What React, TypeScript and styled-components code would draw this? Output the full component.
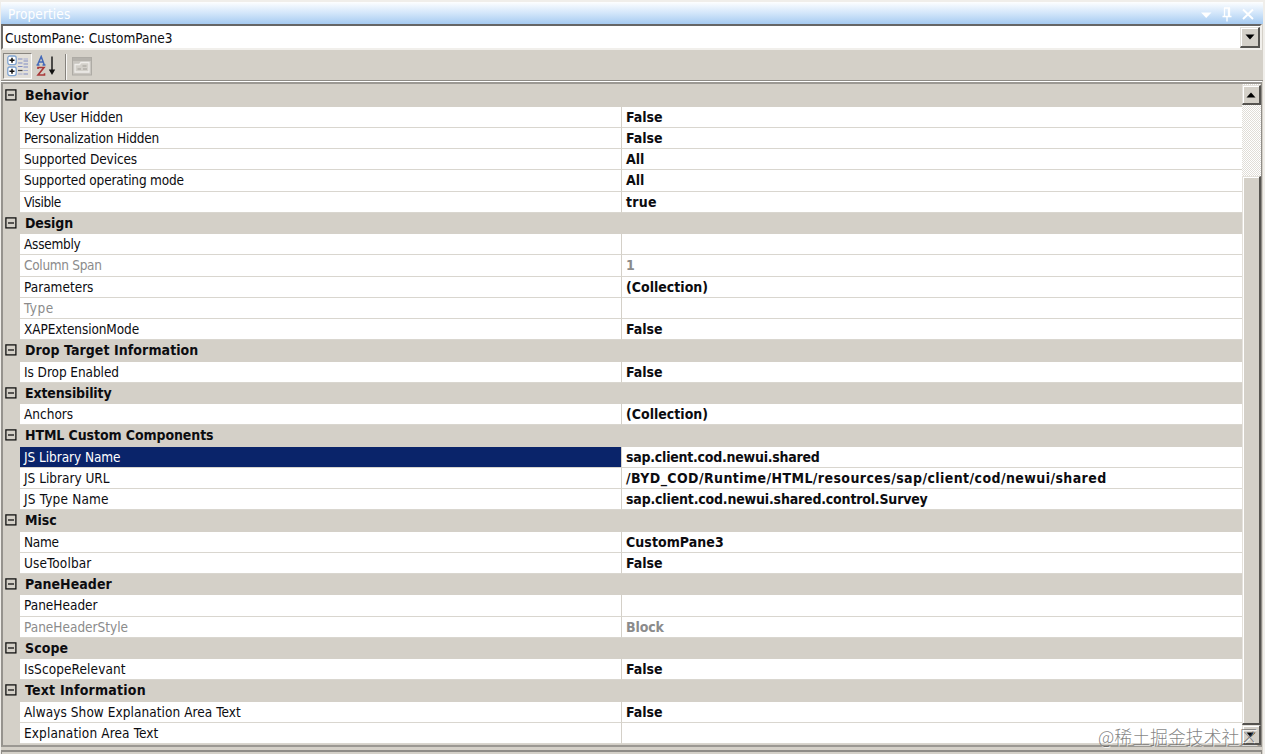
import React from 'react';
import styled, { createGlobalStyle, css } from 'styled-components';

const FACE = '#d4d0c8';

const GlobalStyle = createGlobalStyle`
  html, body { margin: 0; padding: 0; overflow: hidden; background: #f0eeea; }
  * { box-sizing: border-box; }
`;

const Page = styled.div`
  position: relative;
  width: 1265px;
  height: 754px;
  padding: 2px 2px 0 1px;
  overflow: hidden;
  background: #f0eeea;
  font-family: 'DejaVu Sans Condensed', 'DejaVu Sans', sans-serif;
  font-stretch: condensed;
  font-size: 13.5px;
  color: #0c0c10;
`;

const Panel = styled.div`
  display: flex;
  flex-direction: column;
  width: 1262px;
  height: 752px;
  background: ${FACE};
`;

const TitleBar = styled.div`
  display: flex;
  flex: none;
  justify-content: space-between;
  align-items: center;
  height: 22px;
  padding: 2px 9px 0 7px;
  background: linear-gradient(#fdfeff, #d3e6fa 50%, #a6cbf1);
  color: #fff;
`;

const TitleIcons = styled.svg`
  width: 56px;
  height: 16px;
`;

const Label = styled.span<{ $track?: number }>`
  white-space: nowrap;
  letter-spacing: ${(p) => p.$track ?? 0}px;
`;

const Combo = styled.div`
  display: flex;
  flex: none;
  width: 1261px;
  height: 26px;
  border: 2px solid;
  border-color: #666 #f1efeb #f1efeb #6e6c69;
  background: #fff;
`;

const ComboText = styled.div`
  flex: 1;
  padding-left: 2px;
  line-height: 25px;
`;

const Bevel = styled.div`
  display: flex;
  flex: none;
  align-items: center;
  justify-content: center;
  background: ${FACE};
  border: solid;
  border-width: 1px 2px 2px 1px;
  border-color: #e4e1db #55534f #55534f #e4e1db;
  box-shadow: inset 1px 1px #fff;
`;

const ComboButton = styled(Bevel)`
  width: 20px;
  height: 21px;
  margin-top: 1px;
`;

const ArrowIcon = styled.svg`
  width: 10px;
  height: 6px;
  fill: #000;
`;

const Toolbar = styled.div`
  display: flex;
  flex: none;
  align-items: flex-start;
  height: 31px;
  padding: 3px 0 0 2px;
  border-bottom: 1px solid #8f8c87;
`;

const PressedButton = styled.div`
  display: flex;
  align-items: center;
  justify-content: center;
  width: 29px;
  height: 26px;
  border: 1px solid;
  border-color: #88857f #fbfaf9 #fbfaf9 #88857f;
  background: #e2dfd9;
`;

const FlatButton = styled.div`
  display: flex;
  align-items: center;
  justify-content: center;
  width: 29px;
  height: 26px;
`;

const Separator = styled.div`
  width: 2px;
  height: 26px;
  margin: 1px 0 0 4px;
  border-left: 1px solid #85827d;
  border-right: 1px solid #f8f7f5;
`;

const Grid = styled.div`
  display: flex;
  flex: none;
  width: 1261px;
  height: 665px;
  margin-top: 1px;
  border: solid;
  border-width: 2px 1px 2px 2px;
  border-color: #9b9893 #8f8c87 #9b9893 #96938e;
  box-shadow: 0 -1px #fff;
  overflow: hidden;
`;

const Rows = styled.div`
  flex: 1;
  padding-top: 1.3px;
`;

const Category = styled.div`
  display: flex;
  align-items: center;
  height: 21.25px;
  padding-left: 2px;
  font-size: 14px;
  font-weight: bold;
  line-height: 21.5px;
`;

const Toggle = styled.svg`
  width: 12px;
  height: 12px;
  margin: 0 8px 1.4px 0;
`;

const Row = styled.div<{ $muted?: boolean }>`
  display: flex;
  height: 21.25px;
  padding-left: 17px;
  line-height: 21.5px;
  ${(p) => p.$muted && css`color: #8b8b8b;`}
`;

const NameCell = styled.div<{ $selected?: boolean }>`
  width: 602px;
  padding-left: 4px;
  border-right: 1px solid ${FACE};
  border-bottom: 1px solid #d9d6cf;
  background: ${(p) => (p.$selected ? '#0a246a' : '#fff')};
  background-clip: padding-box;
  ${(p) => p.$selected && css`color: #fff;`}
`;

const ValueCell = styled.div`
  flex: 1;
  padding-left: 4px;
  border-bottom: 1px solid #d9d6cf;
  background: #fff;
  font-size: 14px;
  font-weight: bold;
`;

const ScrollBar = styled.div`
  display: flex;
  flex: none;
  flex-direction: column;
  width: 19px;
  padding-top: 1px;
  background-color: #f0eeea;
  background-image: conic-gradient(#fff 25%, #e0ddd7 0 50%, #fff 0 75%, #e0ddd7 0);
  background-size: 2px 2px;
`;

const ScrollButton = styled(Bevel)`
  height: 20px;
`;

const Track = styled.div`
  flex: 1;
  display: flex;
  flex-direction: column;
  padding-top: 71px;
`;

const Thumb = styled(Bevel)`
  flex: 1;
`;

const NextPane = styled.div`
  flex: 1;
  width: 1261px;
  margin-top: 3px;
  border: solid #8f8c87;
  border-width: 2px 1px 0 1px;
`;

const Watermark = styled.div`
  position: absolute;
  left: 1098px;
  top: 723px;
  font-family: 'Noto Sans CJK SC', sans-serif;
  font-weight: 300;
  font-size: 17.9px;
  line-height: 26px;
  white-space: nowrap;
  color: rgba(90, 90, 90, 0.75);
  text-shadow: 1px 1px 0 rgba(255, 255, 255, 0.8);
`;

type Property = {
  name: string;
  track?: number;
  value?: string;
  valueTrack?: number;
  muted?: boolean;
  selected?: boolean;
};

type Section = { title: string; track: number; items: Property[] };

const sections: Section[] = [
  {
    title: 'Behavior',
    track: 0.06,
    items: [
      { name: 'Key User Hidden', track: -0.1, value: 'False' },
      { name: 'Personalization Hidden', track: -0.18, value: 'False' },
      { name: 'Supported Devices', track: -0.11, value: 'All' },
      { name: 'Supported operating mode', track: -0.17, value: 'All' },
      { name: 'Visible', track: -0.4, value: 'true', valueTrack: 0.25 },
    ],
  },
  {
    title: 'Design',
    track: -0.13,
    items: [
      { name: 'Assembly', track: -0.25 },
      { name: 'Column Span', track: -0.3, value: '1', muted: true },
      { name: 'Parameters', value: '(Collection)' },
      { name: 'Type', track: 0.5, muted: true },
      { name: 'XAPExtensionMode', track: -0.1, value: 'False' },
    ],
  },
  {
    title: 'Drop Target Information',
    track: 0.07,
    items: [{ name: 'Is Drop Enabled', track: -0.06, value: 'False' }],
  },
  {
    title: 'Extensibility',
    track: -0.14,
    items: [{ name: 'Anchors', value: '(Collection)' }],
  },
  {
    title: 'HTML Custom Components',
    track: -0.1,
    items: [
      { name: 'JS Library Name', track: -0.05, value: 'sap.client.cod.newui.shared', valueTrack: -0.24, selected: true },
      {
        name: 'JS Library URL',
        value: '/BYD_COD/Runtime/HTML/resources/sap/client/cod/newui/shared',
        valueTrack: 0.41,
      },
      { name: 'JS Type Name', track: 0.18, value: 'sap.client.cod.newui.shared.control.Survey', valueTrack: -0.18 },
    ],
  },
  {
    title: 'Misc',
    track: 0,
    items: [
      { name: 'Name', track: -0.3, value: 'CustomPane3', valueTrack: 0.06 },
      { name: 'UseToolbar', track: 0.12, value: 'False' },
    ],
  },
  {
    title: 'PaneHeader',
    track: 0.06,
    items: [
      { name: 'PaneHeader' },
      { name: 'PaneHeaderStyle', value: 'Block', valueTrack: -0.12, muted: true },
    ],
  },
  {
    title: 'Scope',
    track: 0.1,
    items: [{ name: 'IsScopeRelevant', track: 0.1, value: 'False' }],
  },
  {
    title: 'Text Information',
    track: 0.22,
    items: [
      { name: 'Always Show Explanation Area Text', track: 0.06, value: 'False' },
      { name: 'Explanation Area Text', track: 0.13 },
    ],
  },
];

const Down = () => (
  <ArrowIcon viewBox="0 0 10 6">
    <path d="M0.5 0.5h9L5 5.5z" />
  </ArrowIcon>
);

const Up = () => (
  <ArrowIcon viewBox="0 0 10 6">
    <path d="M0.5 5.5h9L5 0.5z" />
  </ArrowIcon>
);

const CategorizedIcon = () => (
  <svg width="22" height="22" viewBox="0 0 22 22">
    {[1, 12].map((y) => (
      <g key={y}>
        <rect x="0.8" y={y} width="8.4" height="8.6" rx="2" fill="#fff" stroke="#7fa3d0" strokeWidth="1.3" />
        <path d={`M2.5 ${y + 4.3}h5M5 ${y + 1.8}v5`} stroke="#111" strokeWidth="1.5" />
      </g>
    ))}
    <g stroke="#7f8bc4" strokeWidth="1.2">
      <path d="M11 4h4.5M11 8h4.5M11 11.5h4.5M16.5 6h4.5M16.5 9h4.5M16.5 12h4.5M16.5 19h4.5" />
      <path d="M11 15.5h4.5" stroke="#444" />
      <path d="M11 19h4.5M16.5 4h4.5M16.5 15.5h4.5" stroke="#a6aed2" />
    </g>
  </svg>
);

const SortIcon = () => (
  <svg width="22" height="22" viewBox="0 0 22 22">
    <path d="M1.5 10L5.2 1.5L8.3 10M2.8 7h4.5M0.5 10h3M6.5 10h3" fill="none" stroke="#4368b8" strokeWidth="1.5" />
    <path d="M2 14v-1.5h6L2 20h6.5v-1.8" fill="none" stroke="#a93838" strokeWidth="1.6" />
    <path d="M16 1.5v14" stroke="#111" strokeWidth="1.4" />
    <path d="M12.8 14.5h6.4L16 20z" fill="#111" />
  </svg>
);

const PagesIcon = () => (
  <svg width="22" height="22" viewBox="0 0 22 22">
    <rect x="1.5" y="2.5" width="19" height="17.5" fill="#c9c6c0" stroke="#aeaba5" />
    <path d="M2 4.5h18" stroke="#b5b2ac" strokeWidth="3" />
    <path d="M4 17V9.5h4.5l1.5-2h8v9.5z" fill="#d3d0ca" stroke="#efedea" strokeWidth="1.3" />
    <path d="M11.5 11h4M6.5 14h3.5M12 14h4" stroke="#a19e98" strokeWidth="1.2" />
  </svg>
);

const CollapseToggle = () => (
  <Toggle viewBox="0 0 12 12">
    <rect x="0.9" y="0.9" width="10" height="10" fill="none" stroke="#111" strokeWidth="1.3" />
    <path d="M3 6h6" stroke="#111" strokeWidth="1.3" />
  </Toggle>
);

export default function App() {
  return (
    <Page>
      <GlobalStyle />
      <Panel>
        <TitleBar>
          <Label $track={0.1}>Properties</Label>
          <TitleIcons viewBox="0 0 56 16">
            <path d="M3 6.5h10.5L8.2 12z" fill="#fff" />
            <path d="M26.5 2v8M31.5 2v8M26 2h6M24.5 10.5h9M29 10.5v5" stroke="#fff" strokeWidth="1.3" />
            <path d="M30.5 2v8" stroke="#fff" strokeWidth="1.3" />
            <path d="M45 3.5l10 9.5M55 3.5l-10 9.5" stroke="#fff" strokeWidth="1.9" />
          </TitleIcons>
        </TitleBar>
        <Combo>
          <ComboText>
            <Label>CustomPane: CustomPane3</Label>
          </ComboText>
          <ComboButton>
            <Down />
          </ComboButton>
        </Combo>
        <Toolbar>
          <PressedButton>
            <CategorizedIcon />
          </PressedButton>
          <FlatButton>
            <SortIcon />
          </FlatButton>
          <Separator />
          <FlatButton>
            <PagesIcon />
          </FlatButton>
        </Toolbar>
        <Grid>
          <Rows>
            {sections.map((section) => (
              <React.Fragment key={section.title}>
                <Category>
                  <CollapseToggle />
                  <Label $track={section.track}>{section.title}</Label>
                </Category>
                {section.items.map((item) => (
                  <Row key={item.name} $muted={item.muted}>
                    <NameCell $selected={item.selected}>
                      <Label $track={item.track}>{item.name}</Label>
                    </NameCell>
                    <ValueCell>
                      {item.value && <Label $track={item.valueTrack}>{item.value}</Label>}
                    </ValueCell>
                  </Row>
                ))}
              </React.Fragment>
            ))}
          </Rows>
          <ScrollBar>
            <ScrollButton>
              <Up />
            </ScrollButton>
            <Track>
              <Thumb />
            </Track>
            <ScrollButton>
              <Down />
            </ScrollButton>
          </ScrollBar>
        </Grid>
        <NextPane />
      </Panel>
      <Watermark>@稀土掘金技术社区</Watermark>
    </Page>
  );
}
